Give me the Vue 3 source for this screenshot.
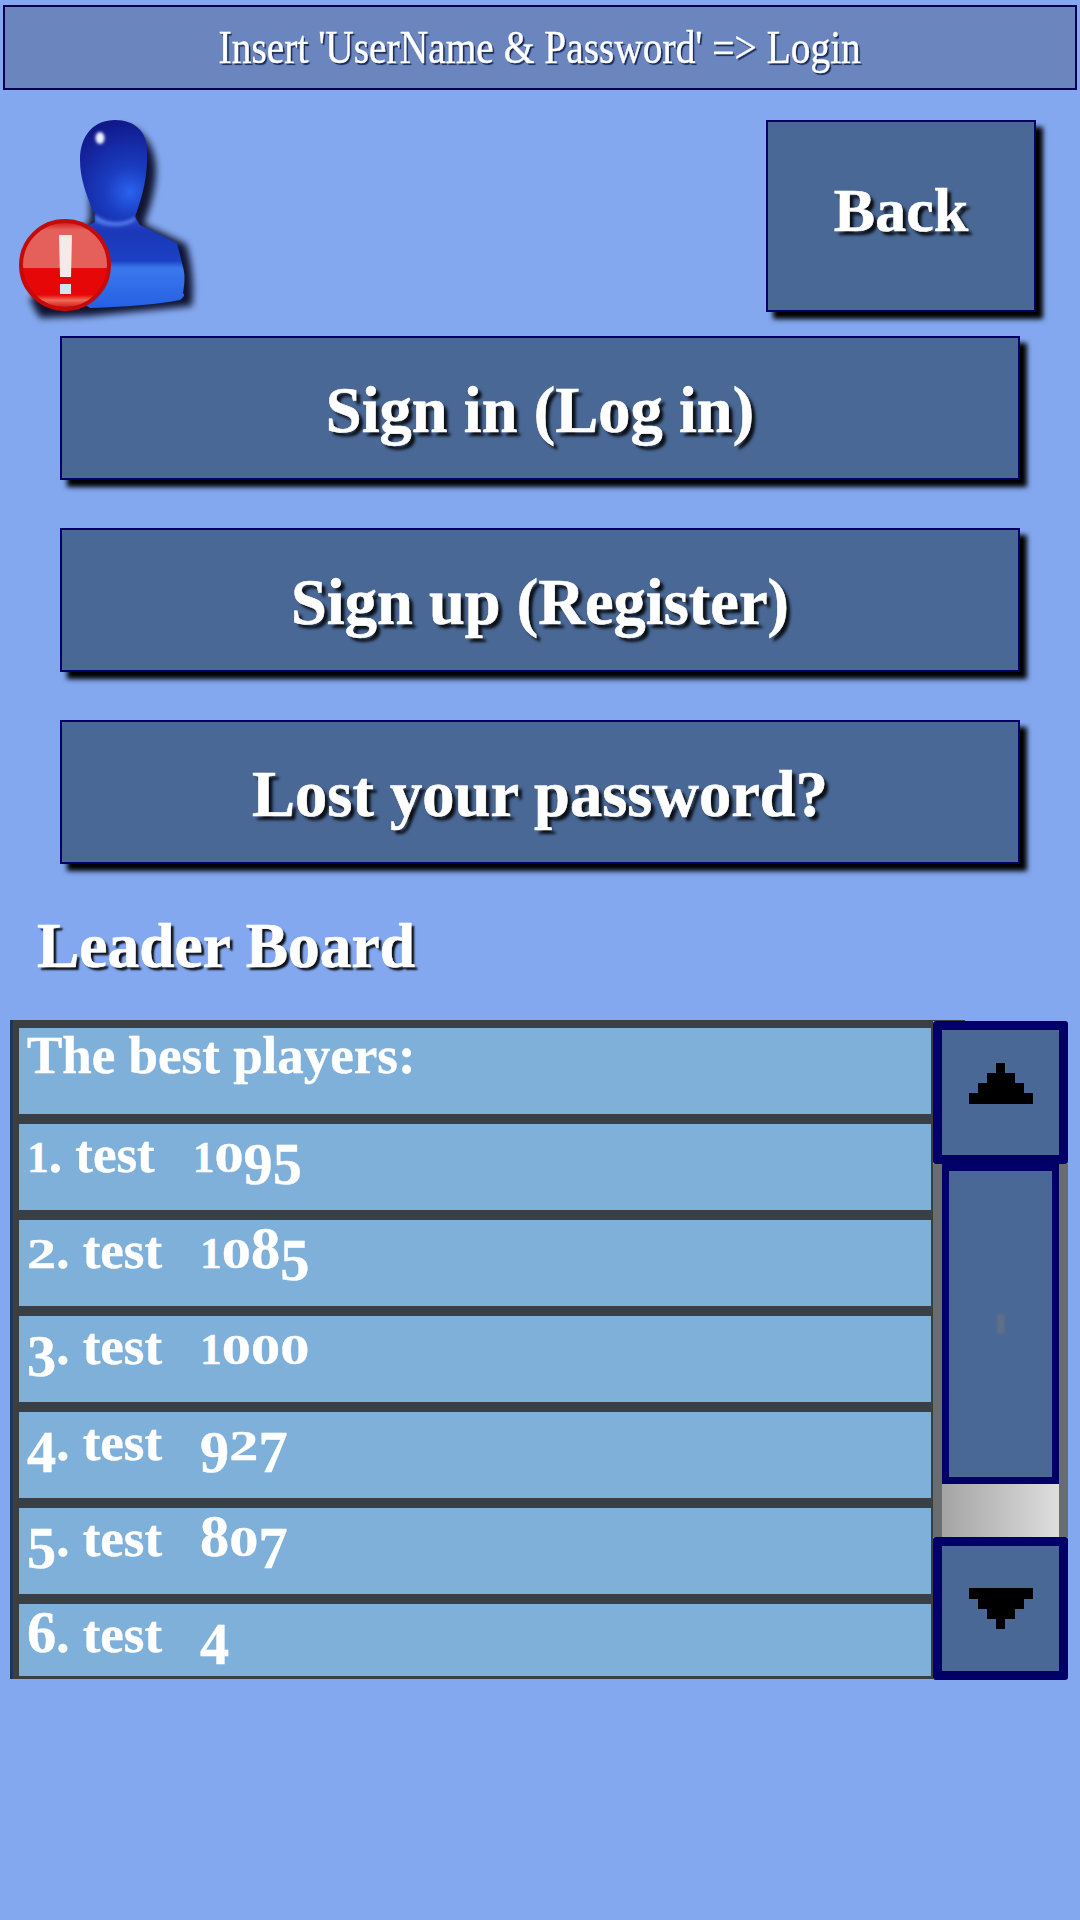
<script setup>
const actions = ['Sign in (Log in)', 'Sign up (Register)', 'Lost your password?']
const players = [
  { rank: '1', name: 'test', score: '1095' },
  { rank: '2', name: 'test', score: '1085' },
  { rank: '3', name: 'test', score: '1000' },
  { rank: '4', name: 'test', score: '927' },
  { rank: '5', name: 'test', score: '807' },
  { rank: '6', name: 'test', score: '4' }
]
const figureClass = (ch) => {
  if (ch === '1') return 'fig one'
  if (ch === '0' || ch === '2') return 'fig low'
  if (ch === '6' || ch === '8') return 'fig'
  return 'fig drop'
}
</script>

<template>
  <div class="page">
    <header class="topbar"><span class="topbar-text">Insert 'UserName &amp; Password' =&gt; Login</span></header>

    <div class="intro">
      <svg class="avatar" width="200" height="200" viewBox="0 0 200 200">
        <defs>
          <filter id="soft" x="-20%" y="-20%" width="140%" height="140%"><feGaussianBlur stdDeviation="3.5" /></filter>
          <filter id="tiny" x="-30%" y="-30%" width="160%" height="160%"><feGaussianBlur stdDeviation="1.5" /></filter>
          <radialGradient id="head" cx="130" cy="72" r="72" gradientUnits="userSpaceOnUse">
            <stop offset="0" stop-color="#2a62f0" />
            <stop offset=".35" stop-color="#1a3cc0" />
            <stop offset="1" stop-color="#11188a" />
          </radialGradient>
          <linearGradient id="body" x1="0" y1="0" x2="0" y2="1">
            <stop offset="0" stop-color="#2a4ed0" />
            <stop offset=".2" stop-color="#1a38b8" />
            <stop offset=".5" stop-color="#1c40c4" />
            <stop offset=".58" stop-color="#3a78ec" />
            <stop offset="1" stop-color="#2560e4" />
          </linearGradient>
          <linearGradient id="red" x1="0" y1="0" x2="0" y2="1">
            <stop offset="0" stop-color="#d41010" />
            <stop offset=".1" stop-color="#e4605a" />
            <stop offset=".53" stop-color="#e6605a" />
            <stop offset=".54" stop-color="#e60808" />
            <stop offset=".84" stop-color="#e60808" />
            <stop offset=".9" stop-color="#f06a58" />
            <stop offset="1" stop-color="#c80808" />
          </linearGradient>
        </defs>
        <path d="M122 6 C142 6 156 26 156 50 C156 72 148 92 144 104 L186 124 C193 145 194 170 192 186 L90 196 L40 198 L30 180 L90 100 L90 60 Z" fill="#020618" opacity=".88" filter="url(#soft)" />
        <path d="M95 93 L95 102 L80 110 L60 170 L90 188 Q150 186 180 180 Q186 176 183 173 C185 160 185 155 183 147 L177 123 L140 105 L135 97 Z" fill="url(#body)" />
        <path d="M115 0 C135 0 147 12 147 30 C148 55 143 75 135 97 C125 106 105 106 95 95 C86 75 80 58 80 40 C80 14 95 0 115 0 Z" fill="url(#head)" />
        <path d="M96 94 C105 104 125 104 135 96 L135 101 C125 108 105 108 95 101 Z" fill="#4e72e6" filter="url(#tiny)" />
        <ellipse cx="100" cy="18" rx="4.5" ry="6" fill="#eef3ff" filter="url(#tiny)" />
        <circle cx="65" cy="145" r="44" fill="url(#red)" stroke="#c60a0a" stroke-width="4" />
        <path d="M59 115 H72 L71 157 H60 Z" fill="#f4eaea" />
        <rect x="60" y="164" width="11" height="10" fill="#cfe4ee" />
      </svg>
      <button class="action back">Back</button>
    </div>

    <div class="actions">
      <button v-for="a in actions" :key="a" class="action wide">{{ a }}</button>
    </div>

    <h2 class="board-title">Leader Board</h2>

    <section class="board">
      <span class="top-rule"></span>
      <div class="list">
        <div class="row">The best players:</div>
        <div v-for="p in players" :key="p.rank" class="row">
          <span v-for="(ch, i) in p.rank" :key="i" :class="figureClass(ch)">{{ ch }}</span>. {{ p.name }}<span class="score"><span v-for="(ch, i) in p.score" :key="i" :class="figureClass(ch)">{{ ch }}</span></span>
        </div>
      </div>
      <div class="scroller">
        <div class="arrow-btn up">
          <svg width="64" height="41" viewBox="0 0 64 41"><path d="M27 0h9v10h10v10h9v10h9v11H0V30h9V20h9V10h9z" fill="#000" /></svg>
        </div>
        <div class="track">
          <div class="thumb"><span class="grip"></span></div>
          <div class="gap"></div>
        </div>
        <div class="arrow-btn">
          <svg width="64" height="41" viewBox="0 0 64 41"><path d="M0 0h64v11h-9v10h-9v10H36v10h-9V31H18V21H9V11H0z" fill="#000" /></svg>
        </div>
      </div>
    </section>
  </div>
</template>

<style>
html, body { margin: 0; background: #84a8f0; }
</style>

<style scoped>
.page {
  width: 1080px;
  height: 1920px;
  box-sizing: border-box;
  padding-top: 5px;
  background: #84a8f0;
  font-family: "Liberation Serif", serif;
  color: #fff;
  overflow: hidden;
}
.topbar {
  height: 85px;
  margin: 0 3px 0 3px;
  box-sizing: border-box;
  border: 2px solid #000050;
  background: #6b86be;
  display: flex;
  align-items: center;
  justify-content: center;
  font-size: 46px;
  text-shadow: 2px 2px 1px #1a2a55;
}
.topbar-text {
  display: inline-block;
  white-space: nowrap;
  transform: scaleX(0.857);
  -webkit-text-stroke: 0.4px #fff;
}
.intro {
  display: flex;
  justify-content: space-between;
  align-items: flex-start;
  margin: 30px 44px 24px 0;
  height: 192px;
}
.avatar { overflow: visible; }
.action {
  display: block;
  box-sizing: border-box;
  border: 2px solid #000066;
  background: #4a6895;
  color: #fff;
  font-family: inherit;
  font-weight: 700;
  padding: 0;
  box-shadow: 7px 7px 5px #000;
  text-shadow: 4px 4px 3px rgba(0, 0, 0, 0.85);
  -webkit-text-stroke: 0.6px #fff;
}
.back { width: 270px; height: 192px; font-size: 62px; padding-bottom: 12px; }
.actions { display: flex; flex-direction: column; gap: 48px; margin-left: 60px; }
.wide { width: 960px; height: 144px; font-size: 64.5px; padding-top: 5px; }
.board-title {
  margin: 42px 0 0 37px;
  height: 114px;
  font-size: 63.5px;
  line-height: 80px;
  font-weight: 700;
  text-shadow: 3px 3px 2px rgba(0, 0, 0, 0.9);
  -webkit-text-stroke: 0.6px #fff;
}
.board {
  position: relative;
  display: flex;
  margin-left: 10px;
  height: 660px;
}
.top-rule {
  position: absolute;
  left: 923px;
  top: 0;
  width: 32px;
  height: 1px;
  background: #3a3f42;
}
.list {
  width: 923px;
  height: 659px;
  box-sizing: border-box;
  border-left: 3px solid #1f3560;
  overflow: hidden;
  background: #3a3f42;
  padding: 8px 2px 3px 6px;
  display: flex;
  flex-direction: column;
  gap: 10px;
}
.row {
  flex: 0 0 86px;
  background: #7fb0da;
  box-sizing: border-box;
  padding-left: 8px;
  font-size: 53px;
  line-height: 54px;
  font-weight: 700;
  white-space: nowrap;
  -webkit-text-stroke: 0.4px #fff;
}
.row:last-child { flex: 1 1 0; }
.score { margin-left: 38px; }
.fig {
  display: inline-block;
  font-size: 1.1em;
  line-height: 1;
}
.low { transform: scaleY(0.73); transform-origin: 50% 84%; }
.one { font-size: 0.82em; }
.drop { transform: translateY(0.2em); }
.scroller {
  width: 135px;
  height: 659px;
  margin-top: 1px;
  display: flex;
  flex-direction: column;
}
.arrow-btn {
  flex: 0 0 143px;
  box-sizing: border-box;
  border: 9px solid #000066;
  border-radius: 3px;
  background: #4a6895;
  display: flex;
  align-items: center;
  justify-content: center;
}
.arrow-btn.up { padding-bottom: 19px; }
.track {
  flex: 1;
  background: #6a6d70;
  padding: 0 9px;
  display: flex;
  flex-direction: column;
}
.thumb {
  flex: 0 0 320px;
  box-sizing: border-box;
  border: 7px solid #000066;
  background: #4a6895;
  display: flex;
  align-items: center;
  justify-content: center;
}
.grip { width: 8px; height: 20px; background: #5e6f88; filter: blur(1px); }
.gap { flex: 1; background: linear-gradient(90deg, #a4a4a4, #dedede); }
</style>
